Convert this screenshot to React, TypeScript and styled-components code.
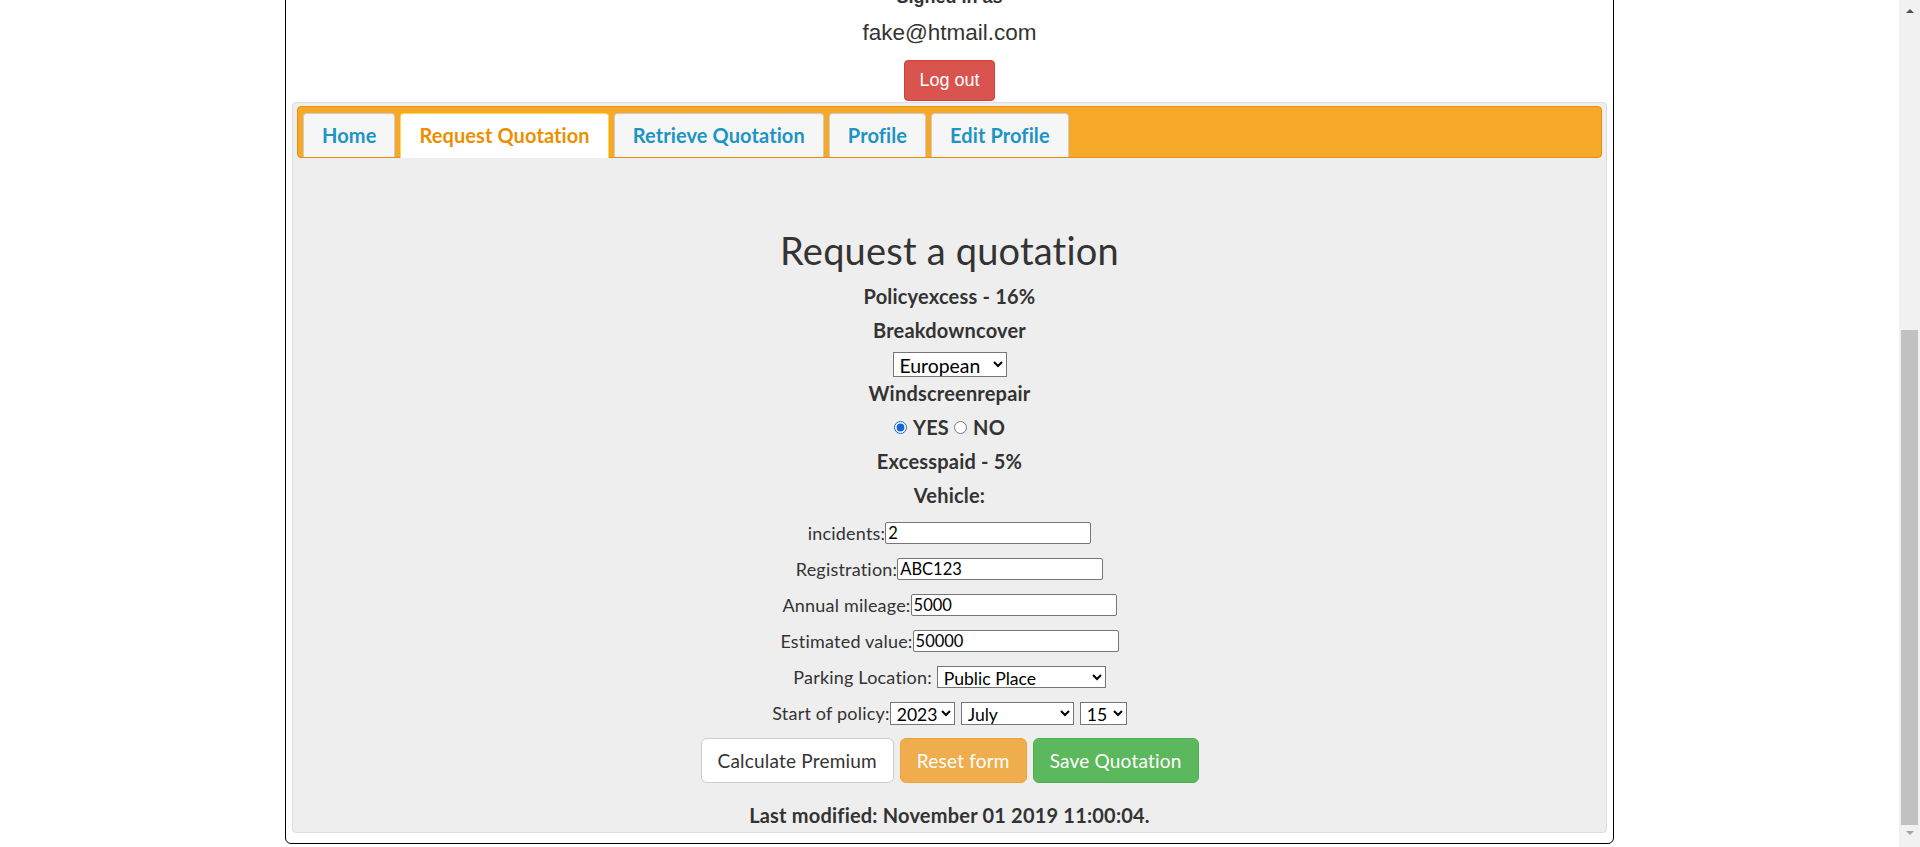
import React from "react";
import styled, { createGlobalStyle } from "styled-components";

const GlobalStyle = createGlobalStyle`
  html, body {
    margin: 0;
    padding: 0;
    height: 100%;
    overflow: hidden;
    background: #fff;
  }
  #root {
    height: 100%;
  }
`;

const Screen = styled.div`
  display: flex;
  height: 847px;
`;

const Viewport = styled.div`
  flex: 1;
  overflow: hidden;
`;

// fake browser scrollbar (page is scrolled to the bottom)
const ScrollTrack = styled.div`
  width: 21px;
  background: #f1f1f1;
  display: flex;
  flex-direction: column;
  align-items: center;
`;

const ScrollArrow = styled.div<{ $down?: boolean }>`
  width: 0;
  height: 0;
  border-left: 4px solid transparent;
  border-right: 4px solid transparent;
  ${(p) =>
    p.$down
      ? "border-top: 4px solid #a3a3a3; margin-top: 6px;"
      : "border-bottom: 4px solid #505050; margin-top: 9px;"}
`;

const ScrollThumb = styled.div`
  width: 17px;
  height: 495px;
  margin-top: 317px;
  background: #c1c1c1;
`;

const Container = styled.div`
  box-sizing: border-box;
  width: 1329px;
  margin: -14px auto 0;
  border: 1px solid #000;
  border-radius: 6px;
  padding: 0 6px 10px;
  background: #fff;
  text-align: center;
`;

const SignedIn = styled.div`
  font-family: "Liberation Sans", Arial, sans-serif;
  font-weight: bold;
  font-size: 18px;
  line-height: 20px;
  color: #333;
`;

const Email = styled.div`
  margin-top: 12px;
  font-family: "Liberation Sans", Arial, sans-serif;
  font-size: 22.5px;
  line-height: 27px;
  color: #333;
`;

const LogoutButton = styled.button`
  box-sizing: border-box;
  width: 91px;
  height: 41px;
  margin-top: 14px;
  padding: 0;
  border: 1px solid #d43f3a;
  border-radius: 4px;
  background: #d9534f;
  color: #fff;
  font-family: "Liberation Sans", Arial, sans-serif;
  font-size: 18px;
  cursor: pointer;
`;

const Panel = styled.div`
  margin-top: 1px;
  border: 1px solid #ddd;
  border-radius: 4px;
  background: #eee;
  padding: 3px 4px 6px;
  font-family: Lato, "Open Sans", sans-serif;
  color: #333;
`;

const TabBar = styled.div`
  box-sizing: border-box;
  height: 52px;
  display: flex;
  align-items: flex-end;
  gap: 5px;
  padding: 6px 0 0 5px;
  border: 1px solid #e78f08;
  border-radius: 4px;
  background: #f6a828;
`;

const Tab = styled.div<{ $active?: boolean }>`
  box-sizing: border-box;
  height: ${(p) => (p.$active ? "45px" : "44px")};
  margin-bottom: ${(p) => (p.$active ? "-1px" : "0")};
  padding: 0 18px ${(p) => (p.$active ? "1px" : "0")};
  border: 1px solid ${(p) => (p.$active ? "#fbd850" : "#ccc")};
  border-bottom: 0;
  border-radius: 4px 4px 0 0;
  background: ${(p) => (p.$active ? "#fff" : "#f6f6f6")};
  color: ${(p) => (p.$active ? "#eb8f00" : "#1c94c4")};
  font-weight: bold;
  font-size: 20px;
  letter-spacing: 0.1px;
  line-height: 43px;
  white-space: nowrap;
  cursor: pointer;
`;

const Form = styled.div`
  display: flex;
  flex-direction: column;
  align-items: center;
`;

const Title = styled.h1`
  margin: 69px 0 0;
  font-size: 38px;
  font-weight: normal;
  letter-spacing: 0.2px;
  line-height: 46px;
`;

const Info = styled.div<{ $gap: number }>`
  margin-top: ${(p) => p.$gap}px;
  font-weight: bold;
  font-size: 20px;
  letter-spacing: 0.2px;
  line-height: 24px;
  display: flex;
  align-items: center;
`;

const Radio = styled.input`
  width: 13px;
  height: 13px;
  margin: 0 6px 0 0;
  accent-color: #1565d8;
`;

const RadioLabel = styled.span`
  margin-right: 5px;
`;

const FieldRow = styled.div<{ $gap: number }>`
  margin-top: ${(p) => p.$gap}px;
  height: 22px;
  display: flex;
  align-items: center;
  justify-content: center;
  font-size: 18px;
  letter-spacing: 0.2px;
  white-space: pre;
`;

const TextInput = styled.input`
  box-sizing: border-box;
  width: 206px;
  height: 22px;
  padding: 1px 2px;
  border: 1px solid #767676;
  border-radius: 2px;
  background: #fff;
  color: #000;
  font-family: Lato, "Open Sans", sans-serif;
  font-size: 16.5px;
`;

const Select = styled.select<{ $w: number; $h: number; $size: number }>`
  box-sizing: border-box;
  width: ${(p) => p.$w}px;
  height: ${(p) => p.$h}px;
  margin: 0;
  padding: 0 0 0 2px;
  border: 1px solid #767676;
  border-radius: 0;
  background-color: #fff;
  color: #000;
  font-family: Lato, "Open Sans", sans-serif;
  font-size: ${(p) => p.$size}px;
`;

const DateSelects = styled.div`
  display: flex;
  gap: 6px;
`;

const Buttons = styled.div`
  margin-top: 14px;
  display: flex;
  gap: 6px;
`;

const ActionButton = styled.button<{ $kind: "default" | "warning" | "success" }>`
  box-sizing: border-box;
  height: 45px;
  padding: 0 16px;
  border-radius: 6px;
  border: 1px solid
    ${(p) => (p.$kind === "default" ? "#ccc" : p.$kind === "warning" ? "#eea236" : "#4cae4c")};
  background: ${(p) =>
    p.$kind === "default" ? "#fff" : p.$kind === "warning" ? "#f0ad4e" : "#5cb85c"};
  color: ${(p) => (p.$kind === "default" ? "#333" : "#fff")};
  font-family: Lato, "Open Sans", sans-serif;
  font-size: 19px;
  letter-spacing: 0.2px;
  cursor: pointer;
`;

const LastModified = styled.div`
  margin-top: 21px;
  font-weight: bold;
  font-size: 20px;
  letter-spacing: 0.2px;
  line-height: 22px;
`;

const tabs = ["Home", "Request Quotation", "Retrieve Quotation", "Profile", "Edit Profile"];

export default function App() {
  return (
    <>
      <GlobalStyle />
      <Screen>
        <Viewport>
          <Container>
            <SignedIn>Signed in as</SignedIn>
            <Email>fake@htmail.com</Email>
            <LogoutButton>Log out</LogoutButton>
            <Panel>
              <TabBar>
                {tabs.map((t) => (
                  <Tab key={t} $active={t === "Request Quotation"}>
                    {t}
                  </Tab>
                ))}
              </TabBar>
              <Form>
                <Title>Request a quotation</Title>
                <Info $gap={11}>Policyexcess - 16%</Info>
                <Info $gap={10}>Breakdowncover</Info>
                <Select $w={114} $h={25} $size={19.4} defaultValue="European" style={{ marginTop: 10 }}>
                  <option>None</option>
                  <option>Roadside</option>
                  <option>At home</option>
                  <option>European</option>
                </Select>
                <Info $gap={4}>Windscreenrepair</Info>
                <Info $gap={10}>
                  <Radio type="radio" name="wind" defaultChecked />
                  <RadioLabel>YES</RadioLabel>
                  <Radio type="radio" name="wind" />
                  NO
                </Info>
                <Info $gap={10}>Excesspaid - 5%</Info>
                <Info $gap={10}>Vehicle:</Info>
                <FieldRow $gap={15}>
                  incidents:<TextInput defaultValue="2" />
                </FieldRow>
                <FieldRow $gap={14}>
                  Registration:<TextInput defaultValue="ABC123" />
                </FieldRow>
                <FieldRow $gap={14}>
                  Annual mileage:<TextInput defaultValue="5000" />
                </FieldRow>
                <FieldRow $gap={14}>
                  Estimated value:<TextInput defaultValue="50000" />
                </FieldRow>
                <FieldRow $gap={14}>
                  {"Parking Location: "}
                  <Select $w={169} $h={22} $size={17.6} defaultValue="Public Place">
                    <option>Public Place</option>
                    <option>Garage</option>
                    <option>Driveway</option>
                  </Select>
                </FieldRow>
                <FieldRow $gap={14}>
                  Start of policy:
                  <DateSelects>
                    <Select $w={65} $h={23} $size={17.6} defaultValue="2023">
                      <option>2023</option>
                      <option>2024</option>
                    </Select>
                    <Select $w={113} $h={23} $size={17.6} defaultValue="July">
                      <option>June</option>
                      <option>July</option>
                      <option>August</option>
                    </Select>
                    <Select $w={47} $h={23} $size={17.6} defaultValue="15">
                      <option>14</option>
                      <option>15</option>
                      <option>16</option>
                    </Select>
                  </DateSelects>
                </FieldRow>
                <Buttons>
                  <ActionButton $kind="default">Calculate Premium</ActionButton>
                  <ActionButton $kind="warning">Reset form</ActionButton>
                  <ActionButton $kind="success">Save Quotation</ActionButton>
                </Buttons>
                <LastModified>Last modified: November 01 2019 11:00:04.</LastModified>
              </Form>
            </Panel>
          </Container>
        </Viewport>
        <ScrollTrack>
          <ScrollArrow />
          <ScrollThumb />
          <ScrollArrow $down />
        </ScrollTrack>
      </Screen>
    </>
  );
}
